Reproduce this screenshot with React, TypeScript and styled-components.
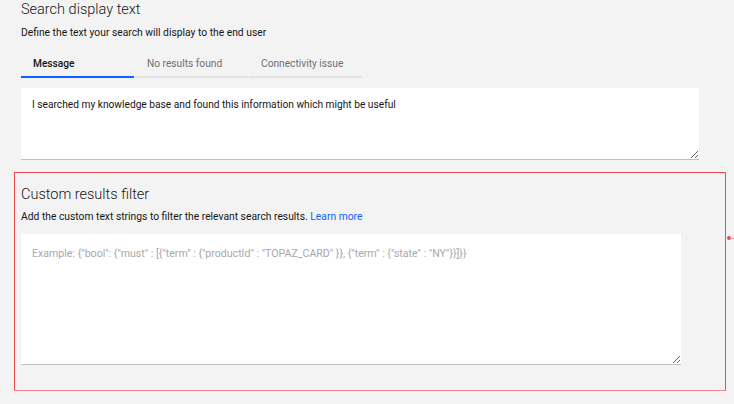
import React from "react";
import styled, { createGlobalStyle } from "styled-components";

const Global = createGlobalStyle`
  html, body { margin: 0; padding: 0; background: #f3f3f3; }
  body { font-family: Roboto, "Noto Sans", sans-serif; color: #161616; }
  * { box-sizing: border-box; }
`;

const Page = styled.div`
  position: relative;
  width: 734px;
  height: 404px;
  overflow: hidden;
  background: #f3f3f3;
`;

const Section = styled.section`
  display: flex;
  flex-direction: column;
  padding: 0 0 0 21px;
`;

const Title = styled.h2`
  margin: 0;
  font-family: Roboto, sans-serif;
  font-weight: 300;
  font-size: 14.5px;
  line-height: 20px;
  color: #161616;
`;

const Subtitle = styled.p<{ $mt: number }>`
  margin: ${(p) => p.$mt}px 0 0;
  font-size: 10.3px;
  line-height: 14px;
  color: #161616;
`;

const Link = styled.a`
  color: #0f62fe;
  text-decoration: none;
`;

const Tabs = styled.div`
  display: flex;
  gap: 1px;
  margin-top: 11px;
`;

const Tab = styled.div<{ $active?: boolean; $w: number }>`
  width: ${(p) => p.$w}px;
  height: 27px;
  padding: 0 0 0 12px;
  display: flex;
  align-items: center;
  font-size: 10.2px;
  font-weight: ${(p) => (p.$active ? 500 : 400)};
  color: ${(p) => (p.$active ? "#161616" : "#6f6f6f")};
  border-bottom: ${(p) => (p.$active ? "2px solid #0f62fe" : "2px solid #e4e4e4")};
`;

const TextArea = styled.textarea<{ $w: number; $h: number; $pt: number }>`
  display: block;
  width: ${(p) => p.$w}px;
  height: ${(p) => p.$h}px;
  margin: 0;
  padding: ${(p) => p.$pt}px 11px 10px;
  border: none;
  border-bottom: 1px solid #c1c1c1;
  background: #ffffff;
  font-family: Roboto, sans-serif;
  font-size: 10.2px;
  line-height: 14px;
  color: #161616;
  resize: vertical;
  outline: none;
  &::placeholder { color: #a8a8a8; font-size: 10.6px; }
`;

const FirstArea = styled.div`
  margin-top: 10px;
`;

const FilterBox = styled.section`
  margin: 12px 0 0 14px;
  width: 712px;
  height: 219px;
  border: 1px solid #f04a4f;
  border-bottom-color: #f28a8c;
  padding: 12px 0 0 6px;
  display: flex;
  flex-direction: column;
`;

const SecondArea = styled.div`
  margin-top: 10px;
`;

const Marker = styled.span`
  position: absolute;
  left: 726px;
  top: 236px;
  width: 8px;
  height: 5px;
  &::before {
    content: "";
    position: absolute;
    left: 1px;
    top: 0;
    width: 4px;
    height: 4px;
    border-radius: 50%;
    background: #f04a4f;
  }
  &::after {
    content: "";
    position: absolute;
    left: 4px;
    top: 2px;
    width: 5px;
    height: 1px;
    background: #f6a0a2;
  }
`;

export default function App() {
  return (
    <Page>
      <Global />
      <Section>
        <Title>Search display text</Title>
        <Subtitle $mt={6}>Define the text your search will display to the end user</Subtitle>
        <Tabs>
          <Tab $active $w={113}>Message</Tab>
          <Tab $w={113}>No results found</Tab>
          <Tab $w={113}>Connectivity issue</Tab>
        </Tabs>
        <FirstArea>
          <TextArea
            $w={678}
            $h={72}
            $pt={10}
            defaultValue="I searched my knowledge base and found this information which might be useful"
          />
        </FirstArea>
      </Section>
      <FilterBox>
        <Title>Custom results filter</Title>
        <Subtitle $mt={5}>
          Add the custom text strings to filter the relevant search results.{" "}
          <Link href="#">Learn more</Link>
        </Subtitle>
        <SecondArea>
          <TextArea
            $w={660}
            $h={131}
            $pt={13}
            placeholder={'Example: {"bool": {"must" : [{"term" : {"productId" : "TOPAZ_CARD" }}, {"term" : {"state" : "NY"}}]}}'}
          />
        </SecondArea>
      </FilterBox>
      <Marker />
    </Page>
  );
}
